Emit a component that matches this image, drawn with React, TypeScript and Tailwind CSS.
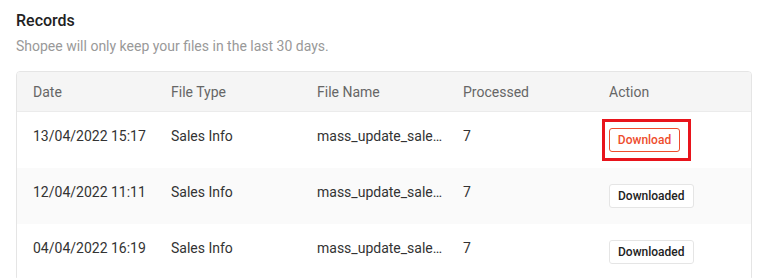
export default function App() {
  const rows = [
    { date: "13/04/2022 15:17", type: "Sales Info", name: "mass_update_sale…", processed: "7", done: false, bg: "bg-white" },
    { date: "12/04/2022 11:11", type: "Sales Info", name: "mass_update_sale…", processed: "7", done: true, bg: "bg-[#fafafa]" },
    { date: "04/04/2022 16:19", type: "Sales Info", name: "mass_update_sale…", processed: "7", done: true, bg: "bg-white" },
  ];

  return (
    <main className="w-[761px] h-[278px] overflow-hidden bg-white pl-4 pr-[9px] pt-[9px] font-['Roboto',sans-serif]">
      {/* header */}
      <h2 className="text-base leading-6 font-medium text-[#222]">Records</h2>
      <p className="mt-[3px] text-sm leading-5 text-[#999]">Shopee will only keep your files in the last 30 days.</p>

      {/* table */}
      <div className="mt-[15px] border border-[#e5e5e5] rounded-[4px] overflow-hidden text-sm">
        <div className="flex h-[40px] items-center bg-[#f5f5f5] text-[#666] border-b border-[#ebebeb]">
          <div className="w-[154px] pl-4">Date</div>
          <div className="w-[146px]">File Type</div>
          <div className="w-[146px]">File Name</div>
          <div className="w-[146px]">Processed</div>
          <div className="flex-1">Action</div>
        </div>
        {rows.map((r, i) => (
          <div key={i} className={`flex h-[56px] ${r.bg} text-[#333]`}>
            <div className="w-[154px] pl-4 pt-[14px] leading-5">{r.date}</div>
            <div className="w-[146px] pt-[14px] leading-5">{r.type}</div>
            <div className="w-[146px] pt-[14px] leading-5">{r.name}</div>
            <div className="w-[146px] pt-[14px] leading-5">{r.processed}</div>
            <div className="flex-1 flex items-center">
              {r.done ? (
                <button className="h-[24px] px-[8px] rounded-[3px] border border-[#e5e5e5] bg-white text-xs font-medium text-[#222]">
                  Downloaded
                </button>
              ) : (
                <div className="relative">
                  <button className="h-[24px] w-[71px] rounded-[3px] border border-[#ee4d2d] bg-white text-xs font-medium text-[#ee4d2d]">
                    Download
                  </button>
                  <div className="absolute -left-[7px] -top-[9px] w-[89px] h-[42px] border-[3px] border-[#e8141c]" />
                </div>
              )}
            </div>
          </div>
        ))}
      </div>
    </main>
  );
}
